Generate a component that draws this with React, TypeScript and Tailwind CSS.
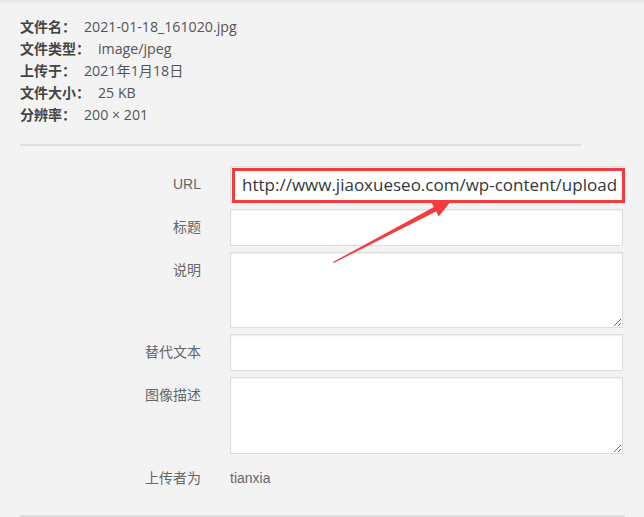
import React from "react";

const font = "font-['Liberation_Sans','Noto_Sans_CJK_SC',sans-serif]";

const meta = [
  ["文件名：", "2021-01-18_161020.jpg"],
  ["文件类型：", "image/jpeg"],
  ["上传于：", "2021年1月18日"],
  ["文件大小：", "25 KB"],
  ["分辨率：", "200 × 201"],
];

function Row({ label, children }: { label: string; children: React.ReactNode }) {
  return (
    <div className="flex gap-[29px]">
      <div className="w-[201px] shrink-0 text-right text-[14px] leading-[37px] text-[#666]">{label}</div>
      {children}
    </div>
  );
}

const boxCls =
  "w-[393px] border border-[#dddddd] bg-white shadow-[inset_0_1px_2px_rgba(0,0,0,0.07)] outline-none";

export default function App() {
  return (
    <div className={`relative h-[517px] w-[644px] overflow-hidden bg-[#f3f3f3] ${font}`}>
      {/* top shade */}
      <div className="absolute left-0 right-0 top-0 h-[4px] bg-gradient-to-b from-[#e4e4e4] to-transparent" />

      {/* file details */}
      <div className="pl-[20px] pt-[16px]">
        {meta.map(([k, v]) => (
          <div key={k} className="text-[14px] leading-[22px] text-[#555]">
            <strong className="font-bold text-[#444]">{k}</strong>
            <span className="ml-[8px] font-['Open_Sans','Noto_Sans_CJK_SC',sans-serif] text-[14.2px]">{v}</span>
          </div>
        ))}
        <div className="mt-[18px] h-[2px] w-[561px] bg-[#dedede]" />
      </div>

      {/* attachment fields */}
      <div className="mt-[20px] flex flex-col gap-[6px]">
        <Row label="URL">
          <div className="relative">
            <input
              readOnly
              value="http://www.jiaoxueseo.com/wp-content/uploads/2021/01/2021-01-18_161020.jpg"
              className={`${boxCls} h-[37px] bg-[#efefef] pl-[11px] pr-[4px] font-['Open_Sans',sans-serif] text-[17px] text-[#32373c]`}
            />
            <div className="absolute left-[2px] top-[2px] h-[35px] w-[393px] border-[3px] border-[#f63b3e]" />
          </div>
        </Row>
        <Row label="标题">
          <input className={`${boxCls} h-[37px]`} />
        </Row>
        <Row label="说明">
          <textarea className={`${boxCls} h-[76px]`} />
        </Row>
        <Row label="替代文本">
          <input className={`${boxCls} h-[37px]`} />
        </Row>
        <Row label="图像描述">
          <textarea className={`${boxCls} h-[77px]`} />
        </Row>
        <div className="flex gap-[29px]">
          <div className="w-[201px] text-right text-[14px] leading-[37px] text-[#666]">上传者为</div>
          <div className="text-[14px] leading-[37px] text-[#666]">tianxia</div>
        </div>
      </div>
      <div className="ml-[20px] mt-[18px] h-[2px] w-[605px] bg-[#dcdcdc]" />

      {/* annotation arrow */}
      <svg className="pointer-events-none absolute inset-0" width="644" height="517" viewBox="0 0 644 517">
        <polygon
          fill="#f63b3e"
          points="333,262 433.9,207.1 431.3,202.2 451,201 438.7,216.4 436.1,211.5 333.6,263"
        />
      </svg>
    </div>
  );
}
